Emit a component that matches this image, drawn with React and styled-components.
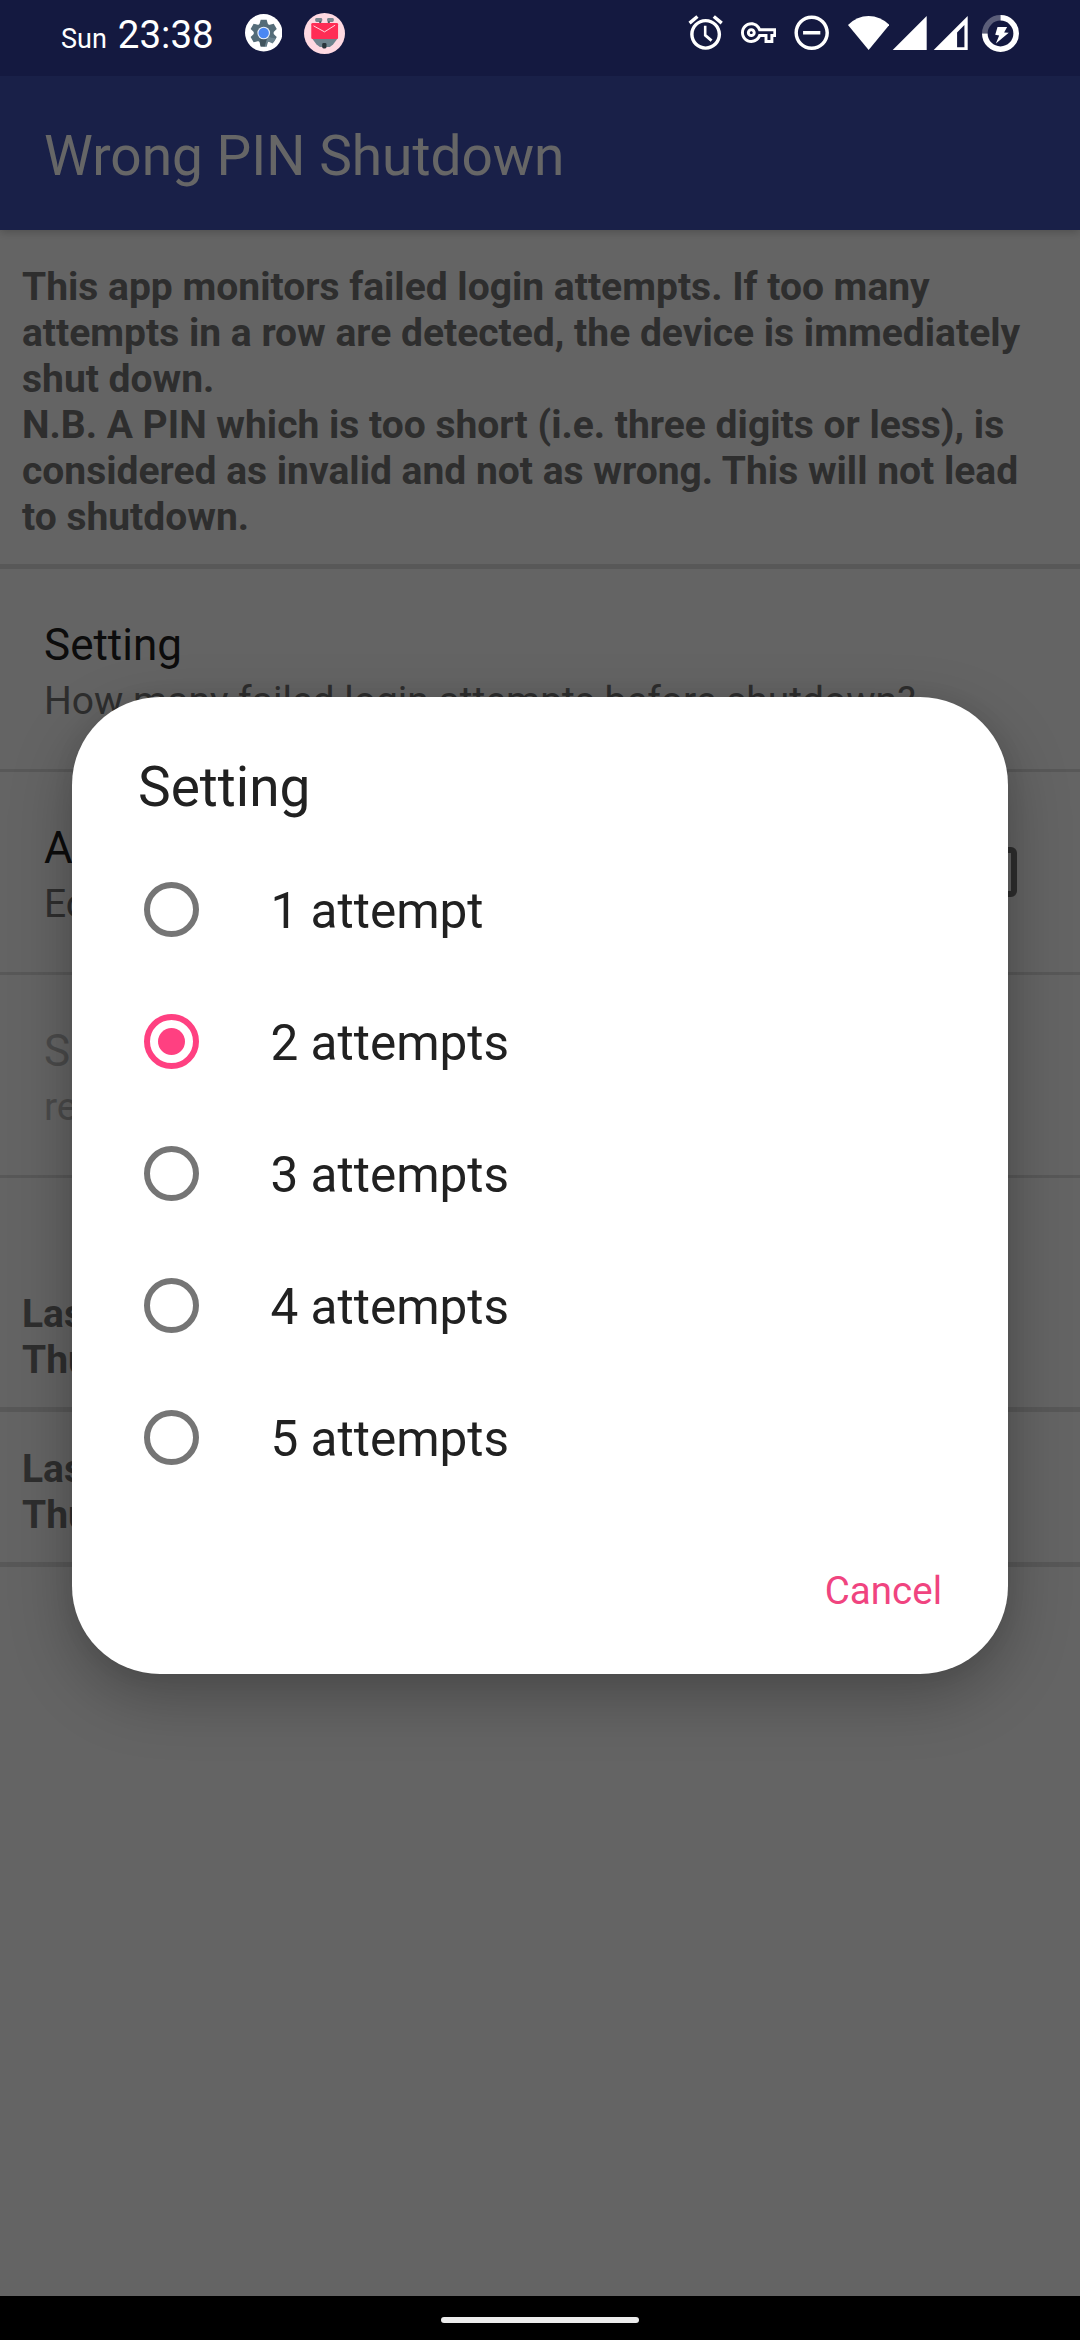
import React from "react";
import styled, { createGlobalStyle } from "styled-components";

const GlobalStyle = createGlobalStyle`
  html, body { margin: 0; padding: 0; background: #000; }
  * { box-sizing: border-box; }
`;

const Screen = styled.div`
  position: relative;
  display: flex;
  flex-direction: column;
  width: 1080px;
  height: 2340px;
  overflow: hidden;
  background: #fafafa;
  font-family: Roboto, "Noto Sans", sans-serif;
`;

/* ---------- status bar ---------- */

const StatusBar = styled.header`
  position: relative;
  z-index: 2;
  flex: none;
  display: flex;
  justify-content: space-between;
  height: 76px;
  padding: 0 61.2px 10px 61px;
  background: #141940;
  color: #fff;
`;

const StatusGroup = styled.div`
  display: flex;
  align-items: center;
`;

const Clock = styled.div`
  display: flex;
  align-items: baseline;
  gap: 11px;
  margin-top: 8px;
  width: 183.6px;
  white-space: nowrap;
  font-size: 38.5px;
  line-height: 46px;
`;

const Day = styled.span`
  font-size: 27px;
`;

const Glyph = styled.svg`
  display: block;
  flex: none;
  width: ${(p) => p.$w}px;
  height: ${(p) => p.$h || p.$w}px;
  margin-left: ${(p) => p.$gap || 0}px;
  fill: #fff;
`;

/* ---------- settings page ---------- */

const AppBar = styled.div`
  position: relative;
  flex: none;
  display: flex;
  align-items: center;
  height: 154px;
  padding: 5px 44px 0;
  background: #3f51b5;
  box-shadow: 0 2px 9px rgba(0, 0, 0, 0.22);
`;

const AppTitle = styled.h1`
  margin: 0;
  color: #fff;
  font-size: 55px;
  font-weight: 400;
  line-height: 64px;
`;

const Page = styled.main`
  flex: 1;
  display: flex;
  flex-direction: column;
`;

const Note = styled.p`
  margin: ${(p) => p.$space || 0}px 0 0;
  padding: 34px 22px 24px;
  border-bottom: 5px solid #dcdcdc;
  color: #737373;
  font-size: 39px;
  font-weight: 700;
  line-height: 46px;
  white-space: pre-line;
`;

const Preference = styled.section`
  display: flex;
  align-items: center;
  justify-content: space-between;
  height: 203px;
  padding: 0 63px 0 44px;
  border-bottom: 3px solid #dcdcdc;
`;

const PreferenceText = styled.div`
  align-self: flex-start;
  padding-top: 50px;
`;

const PreferenceTitle = styled.div`
  color: ${(p) => (p.$disabled ? "#bababa" : "#202020")};
  font-size: 44px;
  line-height: 52px;
`;

const PreferenceSummary = styled.div`
  margin-top: 7px;
  color: ${(p) => (p.$disabled ? "#bababa" : "#737373")};
  font-size: 39px;
  line-height: 46px;
`;

const CheckBox = styled.span`
  width: 50px;
  height: 50px;
  border: 6px solid #737373;
  border-radius: 6px;
`;

const NavBar = styled.footer`
  position: relative;
  z-index: 2;
  flex: none;
  display: flex;
  justify-content: center;
  height: 44px;
  padding-top: 21px;
  background: #000;
`;

const HomePill = styled.div`
  width: 198px;
  height: 6px;
  border-radius: 3px;
  background: #ebebeb;
`;

/* ---------- dialog ---------- */

const Scrim = styled.div`
  position: absolute;
  inset: 0;
  z-index: 1;
  display: flex;
  align-items: center;
  justify-content: center;
  padding: 76px 0 45px;
  background: rgba(0, 0, 0, 0.6);
`;

const Dialog = styled.div`
  display: flex;
  flex-direction: column;
  width: 936px;
  padding: 58px 66px 60px;
  border-radius: 88px;
  background: #fff;
  color: #212121;
  box-shadow: 0 22px 62px rgba(0, 0, 0, 0.27), 0 0 22px rgba(0, 0, 0, 0.06);
`;

const DialogTitle = styled.h2`
  margin: 0 0 24px;
  font-size: 55px;
  font-weight: 400;
  line-height: 64px;
`;

const Options = styled.div`
  display: flex;
  flex-direction: column;
`;

const Option = styled.div`
  display: flex;
  align-items: center;
  gap: 72px;
  height: 132px;
  padding-left: 5.5px;
`;

const Radio = styled.span`
  display: flex;
  align-items: center;
  justify-content: center;
  width: 55px;
  height: 55px;
  border: 6px solid ${(p) => (p.$on ? "#ff4081" : "#757575")};
  border-radius: 50%;

  &::after {
    content: "";
    width: 27px;
    height: 27px;
    border-radius: 50%;
    background: ${(p) => (p.$on ? "#ff4081" : "transparent")};
  }
`;

const OptionLabel = styled.span`
  padding-top: 3px;
  font-size: 49.5px;
  line-height: 58px;
`;

const Actions = styled.div`
  display: flex;
  justify-content: flex-end;
  margin-top: 65px;
`;

const TextButton = styled.button`
  padding: 0;
  border: 0;
  background: none;
  color: #f0447f;
  font-family: inherit;
  font-size: 38.5px;
  font-weight: 400;
  line-height: 46px;
`;

/* ---------- icons ---------- */

const GearBadge = () => (
  <Glyph $w={37.4} viewBox="0 0 112 112">
    <circle cx="56" cy="56" r="56" fill="#fff" />
    <g fill="#546c78">
      <circle cx="56" cy="57" r="30" />
      {[0, 60, 120, 180, 240, 300].map((a) => (
        <path key={a} d="M47 17h18l4 15H43z" transform={`rotate(${a} 56 57)`} />
      ))}
    </g>
    <path d="M56 57l22 14 14 2-9 15-12-5-6 3v11H56z" fill="#6b838f" />
    <path d="M46 72l21-2-8 27H47l-2-12z" fill="#41545d" />
    <circle cx="56" cy="57" r="19" fill="#e9f0fb" />
    <circle cx="56" cy="57" r="15.5" fill="#4a87f2" />
  </Glyph>
);

const MailBadge = () => (
  <Glyph $w={41} $gap={21.8} viewBox="0 0 124 124">
    <circle cx="62" cy="62" r="62" fill="#ffd9e2" />
    <rect x="34" y="15" width="21" height="12" rx="4" fill="#78868f" />
    <rect x="70" y="15" width="20" height="12" rx="4" fill="#78868f" />
    <path d="M46 25h6v7h-6zM72 25h6v7h-6z" fill="#4c5960" />
    <path d="M24 76h78l-14 19-10 8H48l-10-8z" fill="#6e838d" />
    <rect x="22" y="30" width="81" height="49" rx="4" fill="#ff2d55" />
    <path d="M29 39l33 18 32-20" fill="none" stroke="#ffdbe3" strokeWidth="3" />
    <rect x="55" y="91" width="13" height="16" rx="4" fill="#29343a" />
  </Glyph>
);

const AlarmIcon = () => (
  <Glyph $w={41.25} viewBox="0 0 24 24">
    <path d="M22 5.72l-4.6-3.86-1.29 1.53 4.6 3.86L22 5.72zM7.88 3.39L6.6 1.86 2 5.71l1.29 1.53 4.59-3.85zM12.5 8H11v6l3.9 3.3 1.1-1.3-3.5-2.9V8zM12 4c-4.97 0-9 4.03-9 9s4.02 9 9 9c4.97 0 9-4.03 9-9s-4.03-9-9-9zm0 16c-3.87 0-7-3.13-7-7s3.13-7 7-7 7 3.13 7 7-3.13 7-7 7z" />
  </Glyph>
);

const KeyIcon = () => (
  <Glyph $w={35.3} $gap={15} viewBox="0 0 24 24">
    <path d="M22 19h-6v-4h-2.68c-1.14 2.42-3.6 4-6.32 4-3.86 0-7-3.14-7-7s3.14-7 7-7c2.72 0 5.17 1.58 6.32 4H24v6h-2v4zm-4-2h2v-4h2v-2H11.94l-.23-.67C11.01 8.34 9.11 7 7 7c-2.76 0-5 2.24-5 5s2.24 5 5 5c2.11 0 4.01-1.34 4.71-3.33l.23-.67H18v4zM7 15c-1.65 0-3-1.35-3-3s1.35-3 3-3 3 1.35 3 3-1.35 3-3 3zm0-4c-.55 0-1 .45-1 1s.45 1 1 1 1-.45 1-1-.45-1-1-1z" />
  </Glyph>
);

const DoNotDisturbIcon = () => (
  <Glyph $w={41.4} $gap={14.3} viewBox="0 0 24 24">
    <path d="M7 11v2h10v-2H7zm5-9C6.48 2 2 6.48 2 12s4.48 10 10 10 10-4.48 10-10S17.52 2 12 2zm0 18c-4.41 0-8-3.59-8-8s3.59-8 8-8 8 3.59 8 8-3.59 8-8 8z" />
  </Glyph>
);

const WifiIcon = () => (
  <Glyph $w={41.3} $h={34} $gap={16} viewBox="0 0 41.3 34">
    <path d="M20.65 34L0 8.9Q9 0 20.65 0T41.3 8.9z" />
  </Glyph>
);

const SignalFullIcon = () => (
  <Glyph $w={34.7} $gap={3} viewBox="0 0 35 35">
    <path d="M0 35L35 0v35z" />
  </Glyph>
);

const SignalPartIcon = () => (
  <Glyph $w={34.7} $gap={6} viewBox="0 0 35 35">
    <path fillRule="evenodd" d="M0 35L35 0v35zM24.3 31.5h7.4V9l-7.4 7.6z" />
  </Glyph>
);

const BatteryIcon = () => (
  <Glyph $w={37} $gap={14} viewBox="0 0 112 112">
    <g fill="none" strokeWidth="17">
      <path d="M8.5 56A47.5 47.5 0 0 1 56 8.5" stroke="#5b5e79" />
      <path d="M56 8.5A47.5 47.5 0 1 1 8.5 56" stroke="#fff" />
    </g>
    <path d="M47 36h29l-9 17 14 1-39 32 10-24-12-2z" />
  </Glyph>
);

/* ---------- data ---------- */

const INTRO = `This app monitors failed login attempts. If too many attempts in a row are detected, the device is immediately shut down.
N.B. A PIN which is too short (i.e. three digits or less), is considered as invalid and not as wrong. This will not lead to shutdown.`;

const PREFERENCES = [
  { title: "Setting", summary: "How many failed login attempts before shutdown?" },
  { title: "A", summary: "Ec", checkbox: true },
  { title: "S", summary: "re", disabled: true },
];

const OPTIONS = ["1 attempt", "2 attempts", "3 attempts", "4 attempts", "5 attempts"];

export default function App() {
  const [selected, setSelected] = React.useState(1);

  return (
    <>
      <GlobalStyle />
      <Screen>
        <StatusBar>
          <StatusGroup>
            <Clock>
              <Day>Sun</Day>
              <span>23:38</span>
            </Clock>
            <GearBadge />
            <MailBadge />
          </StatusGroup>
          <StatusGroup>
            <AlarmIcon />
            <KeyIcon />
            <DoNotDisturbIcon />
            <WifiIcon />
            <SignalFullIcon />
            <SignalPartIcon />
            <BatteryIcon />
          </StatusGroup>
        </StatusBar>

        <AppBar>
          <AppTitle>Wrong PIN Shutdown</AppTitle>
        </AppBar>

        <Page>
          <Note>{INTRO}</Note>
          {PREFERENCES.map((p) => (
            <Preference key={p.title}>
              <PreferenceText>
                <PreferenceTitle $disabled={p.disabled}>{p.title}</PreferenceTitle>
                <PreferenceSummary $disabled={p.disabled}>{p.summary}</PreferenceSummary>
              </PreferenceText>
              {p.checkbox && <CheckBox />}
            </Preference>
          ))}
          <Note $space={79}>{"Las\nThu"}</Note>
          <Note>{"Las\nThu"}</Note>
        </Page>

        <NavBar>
          <HomePill />
        </NavBar>

        <Scrim>
          <Dialog role="dialog">
            <DialogTitle>Setting</DialogTitle>
            <Options role="radiogroup">
              {OPTIONS.map((label, i) => (
                <Option
                  key={label}
                  role="radio"
                  aria-checked={i === selected}
                  onClick={() => setSelected(i)}
                >
                  <Radio $on={i === selected} />
                  <OptionLabel>{label}</OptionLabel>
                </Option>
              ))}
            </Options>
            <Actions>
              <TextButton>Cancel</TextButton>
            </Actions>
          </Dialog>
        </Scrim>
      </Screen>
    </>
  );
}
